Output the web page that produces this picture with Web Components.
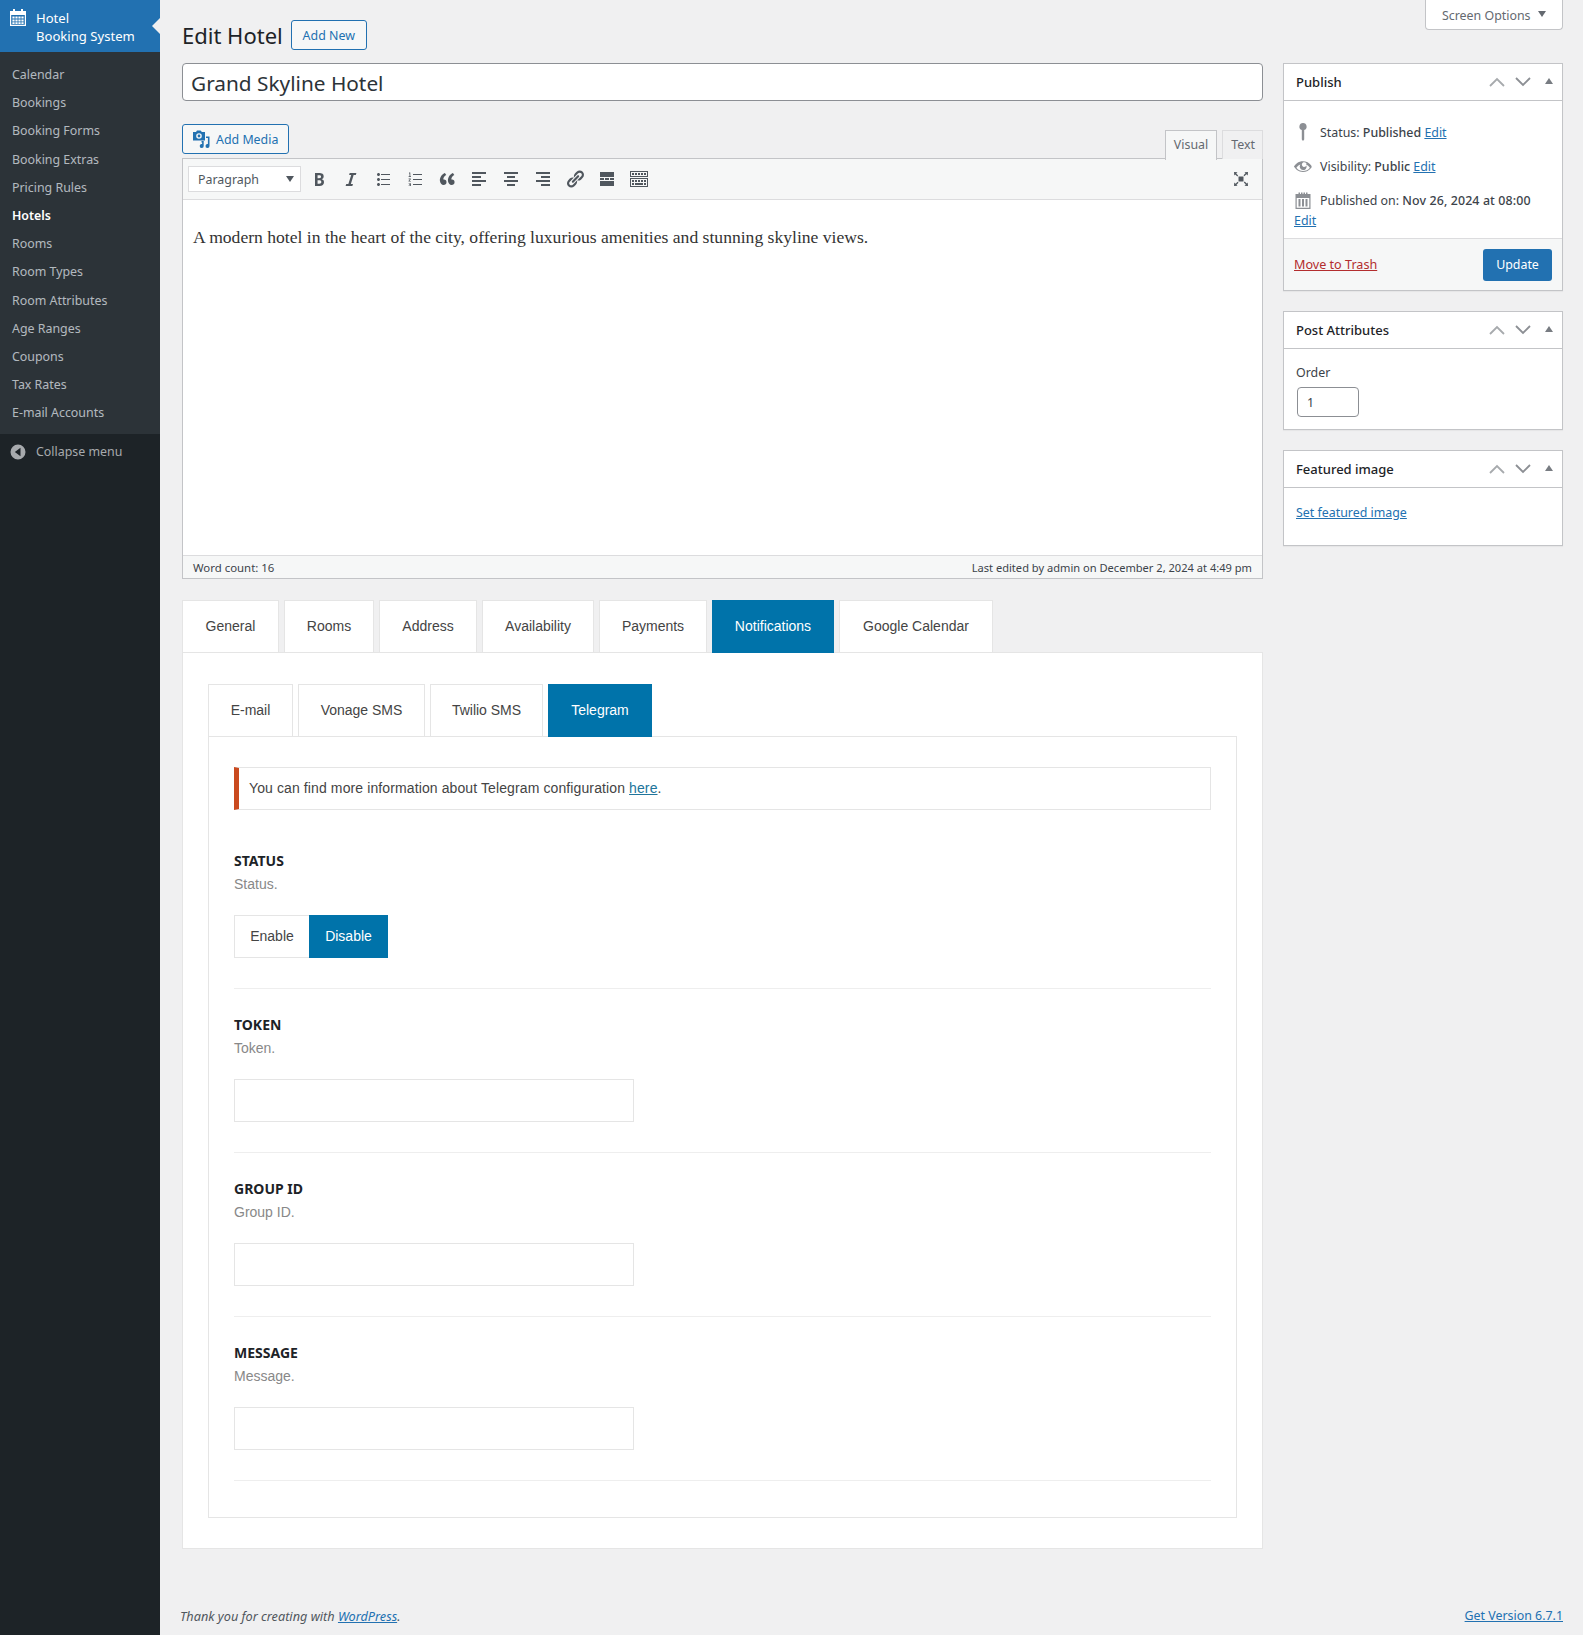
<!DOCTYPE html>
<html>
<head>
<meta charset="utf-8">
<title>Edit Hotel</title>
<style>
  html, body { margin: 0; padding: 0; background: #f0f0f1; }
  body { font-family: "Noto Sans", sans-serif; font-size: 12.4px; color: #3c434a; }
  a { color: #2271b1; }
</style>
</head>
<body>
<hb-app>
  <hb-sidebar slot="side"></hb-sidebar>
  <hb-heading></hb-heading>
  <div class="cols" style="display:flex;gap:20px;align-items:flex-start">
    <div style="width:1081px;flex:none">
      <hb-title value="Grand Skyline Hotel"></hb-title>
      <hb-editor></hb-editor>
      <hb-settings></hb-settings>
    </div>
    <div style="width:280px;flex:none">
      <hb-publish></hb-publish>
      <hb-metabox heading="Post Attributes">
        <div style="padding:0 0 12px">
          <div style="line-height:20px;margin-top:2px;margin-bottom:4px;color:#3c434a;font-size:12.4px">Order</div>
          <div style="width:62px;height:30px;box-sizing:border-box;border:1px solid #8c8f94;border-radius:4px;background:#fff;padding-left:9px;line-height:30px;font-size:12.4px;margin-left:1px">1</div>
        </div>
      </hb-metabox>
      <hb-metabox heading="Featured image">
        <div style="padding:3px 0 22px;line-height:20px;font-size:12.4px"><a href="#">Set featured image</a></div>
      </hb-metabox>
    </div>
  </div>
  <hb-footer></hb-footer>
</hb-app>

<script>
// small helper, every element gets its markup in an open shadow root
function shadow(el, html) {
  el.attachShadow({mode: 'open'}).innerHTML = html;
}

const ic = {
  cal: 'M2 4h3V2h2v2h6V2h2v2h3v15H2zM3.2 8v9.8h13.6V8zM4.4 9.4h2.2v2.2H4.4zm3 0h2.2v2.2H7.4zm3 0h2.2v2.2h-2.2zm3 0h2.2v2.2h-2.2zM4.4 12.4h2.2v2.2H4.4zm3 0h2.2v2.2H7.4zm3 0h2.2v2.2h-2.2zm3 0h2.2v2.2h-2.2zM4.4 15.2h2.2v1.8H4.4zm3 0h2.2v1.8H7.4zm3 0h2.2v1.8h-2.2zm3 0h2.2v1.8h-2.2z',
  media: 'M2 3h3l1-1.5h3.5L11 3h3v8.5H2zM8 4.2a2.8 2.8 0 1 0 0 5.6 2.8 2.8 0 0 0 0-5.6zM8 5.6a1.4 1.4 0 1 1 0 2.8 1.4 1.4 0 0 1 0-2.8zM15 7.5h3.5v9.4a2 2 0 1 1-1.6-1.9V9h-1.9zM10.5 12h2.2v4.9a2 2 0 1 1-1.6-1.9v-1.6h-.6z',
  bold: 'M6 4v13h4.54c1.37 0 2.46-.33 3.26-1 .8-.66 1.2-1.58 1.2-2.77 0-.84-.17-1.51-.51-2.01s-.9-.85-1.67-1.03v-.09c.57-.1 1.02-.4 1.36-.9s.51-1.13.51-1.91c0-1.14-.39-1.98-1.17-2.53C12.75 4.26 11.5 4 9.78 4H6zm2.57 5.15V6.26h1.36c.73 0 1.27.11 1.61.32.34.22.51.58.51 1.07 0 .54-.16.92-.47 1.15s-.82.35-1.51.35h-1.5zm0 2.19h1.6c1.44 0 2.16.53 2.16 1.61 0 .6-.17 1.05-.51 1.34s-.86.43-1.57.43H8.57v-3.38z',
  italic: 'M14.78 6h-2.13l-2.8 9h2.12l-.62 2H4.6l.62-2h2.14L10.2 6H8.1l.62-2h6.7z',
  ul: 'M5.5 7C4.67 7 4 6.33 4 5.5S4.67 4 5.5 4 7 4.67 7 5.5 6.33 7 5.5 7zM8 5h9v1H8V5zm-2.5 7C4.67 12 4 11.33 4 10.5S4.67 9 5.5 9 7 9.67 7 10.5 6.33 12 5.5 12zM8 10h9v1H8v-1zm-2.5 7c-.83 0-1.5-.67-1.5-1.5S4.67 14 5.5 14s1.5.67 1.5 1.5S6.33 17 5.5 17zM8 15h9v1H8v-1z',
  ol: 'M8 5h9v1H8zm0 5h9v1H8zm0 5h9v1H8zM4 3.6h1.3v3.7H6V8H3.6v-.7h.9V4.4H4zM3.6 9.6h2.2v.7l-1.3 1.6h1.4v.7H3.5v-.6l1.4-1.7H3.6zM3.6 14.2h2.3v2.8H3.6v-.6h1.5v-.5H4.2v-.6h.9v-.5H3.6z',
  quote: 'M9.49 13.22c0-.74-.2-1.38-.61-1.9-.62-.78-1.83-.88-2.53-.72-.29-1.65 1.11-3.75 2.92-4.65L7.88 4c-2.73 1.3-5.42 4.28-4.96 8.05C3.21 14.43 4.59 16 6.54 16c.85 0 1.56-.25 2.12-.75s.83-1.18.83-2.03zm8.05 0c0-.74-.2-1.38-.61-1.9-.63-.78-1.83-.88-2.53-.72-.29-1.65 1.11-3.75 2.92-4.65L15.93 4c-2.73 1.3-5.41 4.28-4.95 8.05.29 2.38 1.66 3.95 3.61 3.95.85 0 1.56-.25 2.12-.75s.83-1.18.83-2.03z',
  al: 'M3 3h14v2H3zm0 4h9v2H3zm0 4h14v2H3zm0 4h9v2H3z',
  ac: 'M3 3h14v2H3zm3 4h8v2H6zm-3 4h14v2H3zm3 4h8v2H6z',
  ar: 'M3 3h14v2H3zm5 4h9v2H8zm-5 4h14v2H3zm5 4h9v2H8z',
  link: 'M17.74 2.76c1.68 1.69 1.68 4.41 0 6.1l-1.53 1.52c-1.12 1.12-2.7 1.47-4.14 1.09l2.62-2.61.76-.77.76-.76c.84-.84.84-2.2 0-3.04-.84-.85-2.2-.85-3.04 0l-.77.76-3.38 3.38c-.37-1.44-.02-3.02 1.1-4.14l1.52-1.53c1.69-1.68 4.42-1.68 6.1 0zM8.59 13.43l5.34-5.34c.42-.42.42-1.1 0-1.52-.44-.43-1.13-.39-1.53 0l-5.33 5.34c-.42.42-.42 1.1 0 1.52.44.43 1.13.39 1.52 0zm-.76 2.29l4.14-4.15c.38 1.44.03 3.02-1.09 4.14l-1.52 1.53c-1.69 1.68-4.41 1.68-6.1 0-1.68-1.68-1.68-4.42 0-6.1l1.53-1.52c1.12-1.12 2.7-1.47 4.14-1.1l-4.14 4.15c-.85.84-.85 2.2 0 3.05.84.84 2.2.84 3.04 0z',
  more: 'M3 3h14v5H3zM3 9h4v2H3zm5 0h4v2H8zm5 0h4v2h-4zM3 12h14v5H3z',
  sink: 'M1 2h18v6H1zM2 3v4h16V3zM3 4h2v2H3zm3 0h2v2H6zm3 0h2v2H9zm3 0h2v2h-2zm3 0h2v2h-2zM1 9h18v9H1zM2 10v7h16v-7zM3 11h2v2H3zm3 0h2v2H6zm3 0h2v2H9zm3 0h2v2h-2zm3 0h2v2h-2zM3 14h2v2H3zm3 0h8v2H6zm9 0h2v2h-2z',
  full: 'M7.5 7.5h5v5h-5zM3 3l3.5.3L5.2 4.6l2 2-.9.9-2-2L3.3 6.5zM17 3l-.3 3.5-1.3-1.3-2 2-.9-.9 2-2L13.5 3.3zM3 17l.3-3.5 1.3 1.3 2-2 .9.9-2 2 1 1zM17 17l-3.5-.3 1.3-1.3-2-2 .9-.9 2 2 1-1z',
  pin: 'M10 1a3.6 3.6 0 0 1 1.2 7v9.5L10 19l-1.2-1.5V8A3.6 3.6 0 0 1 10 1z',
  eye: 'M18.3 9.5C15 4.9 8.5 3.8 3.9 7.2c-1.2.9-2.2 2.1-3 3.4.8 1.3 1.8 2.5 3 3.4 4.6 3.4 11 2.3 14.4-2.3.5-.5.5-1.3 0-1.7zm-8.3-3c1.1-.7 2.6-.4 3.3.8s.4 2.6-.8 3.3-2.6.4-3.3-.8-.3-2.6.8-3.3zm0 8.5c-2.6 0-5-1.2-6.6-3.3 1-1.4 2.4-2.6 4-3.2-.4.6-.7 1.3-.7 2.1 0 1.9 1.5 3.5 3.4 3.5s3.5-1.5 3.5-3.4v-.1c0-.8-.3-1.5-.7-2.1 1.6.7 3 1.8 4 3.2-1.6 2.1-4.3 3.3-6.9 3.3z',
  pub: 'M2.5 4h3V2.5h1.5V4h1V2.5h1.5V4h1V2.5H12V4h1V2.5h1.5V4h3v15h-15zM3.7 8v9.8h12.6V8zM5.5 9h2v7.5h-2zm3.5 0h2v7.5H9zm3.5 0h2v7.5h-2z',
  collapse: 'M10 2.5a7.5 7.5 0 1 0 0 15 7.5 7.5 0 0 0 0-15zm2.5 3.2v8.6L6.8 10z'
};

function svg(name, size, color) {
  return `<svg width="${size}" height="${size}" viewBox="0 0 20 20" fill="${color}" style="display:block;flex:none" fill-rule="evenodd"><path d="${ic[name]}"/></svg>`;
}

class HbApp extends HTMLElement {
  constructor() {
    super();
    shadow(this, `
      <style>
        :host { display: flex; min-height: 1635px; }
        .side { width: 160px; flex: none; background: #1d2327; }
        .main { flex: 1; padding: 0 20px 0 22px; min-width: 0; display: flex; flex-direction: column; }
      </style>
      <div class="side"><slot name="side"></slot></div>
      <div class="main"><slot></slot></div>
    `);
  }
}

class HbSidebar extends HTMLElement {
  constructor() {
    super();
    const items = ['Calendar','Bookings','Booking Forms','Booking Extras','Pricing Rules','Hotels','Rooms','Room Types','Room Attributes','Age Ranges','Coupons','Tax Rates','E-mail Accounts'];
    shadow(this, `
      <style>
        :host { display: block; font-size: 12.4px; }
        .top { height: 52px; background: #2271b1; color: #fff; position: relative; display: flex; box-sizing: border-box; padding: 9px 0 0 8px; font-size: 13.1px; line-height: 18px; }
        .top svg { margin-right: 8px; margin-top: -2px; }
        .top::after { content: ""; position: absolute; right: 0; top: 18px; border: 8px solid transparent; border-right-color: #f0f0f1; border-left: 0; }
        ul { list-style: none; margin: 0; padding: 9px 0 7px; background: #2c3338; }
        li { padding: 0 12px; height: 28.2px; line-height: 28px; color: rgba(240,246,252,.7); white-space: nowrap; }
        li.on { color: #fff; font-weight: 600; }
        .col { display: flex; align-items: center; height: 35px; color: #a7aaad; padding-left: 8px; }
        .col svg { margin-right: 8px; }
      </style>
      <div class="top">${svg('cal', 20, '#fff')}<div>Hotel<br>Booking System</div></div>
      <ul>${items.map(t => `<li class="${t == 'Hotels' ? 'on' : ''}">${t}</li>`).join('')}</ul>
      <div class="col">${svg('collapse', 20, '#a7aaad')}<span>Collapse menu</span></div>
    `);
  }
}

class HbHeading extends HTMLElement {
  constructor() {
    super();
    shadow(this, `
      <style>
        :host { display: flex; height: 63px; align-items: flex-start; box-sizing: border-box; }
        h1 { font-size: 22px; font-weight: 400; line-height: 30px; margin: 20px 8px 0 0; color: #1d2327; }
        .add { margin-top: 20px; height: 30px; width: 76px; text-align: center; box-sizing: border-box; border: 1px solid #2271b1; border-radius: 3px; color: #2271b1; background: #f6f7f7; line-height: 29px; font-size: 12.4px; }
        .opts { margin-left: auto; width: 138px; height: 30px; box-sizing: border-box; background: #fff; border: 1px solid #c3c4c7; border-top: 0; border-radius: 0 0 4px 4px; color: #646970; font-size: 12.4px; padding: 1px 0 0 16px; display: flex; align-items: center; }
        .opts i { margin-left: 7px; width: 0; height: 0; border: 4px solid transparent; border-top: 6px solid #646970; border-bottom: 0; margin-top: -2px; }
      </style>
      <h1>Edit Hotel</h1><div class="add">Add New</div>
      <div class="opts">Screen Options<i></i></div>
    `);
  }
}

class HbTitle extends HTMLElement {
  constructor() {
    super();
    shadow(this, `
      <style>
        :host { display: block; height: 38px; box-sizing: border-box; background: #fff; border: 1px solid #8c8f94; border-radius: 4px; font-size: 20.8px; line-height: 38px; padding-left: 8px; color: #2c3338; }
      </style>
      ${this.getAttribute('value')}
    `);
  }
}

class HbEditor extends HTMLElement {
  constructor() {
    super();
    const tools = ['bold','italic','ul','ol','quote','al','ac','ar','link','more','sink'];
    shadow(this, `
      <style>
        :host { display: block; margin-top: 23px; }
        .head { display: flex; height: 35px; align-items: flex-start; }
        .media { height: 30px; box-sizing: border-box; width: 107px; display: flex; align-items: center; border: 1px solid #2271b1; border-radius: 3px; background: #f6f7f7; color: #2271b1; padding-left: 8px; font-size: 12.4px; }
        .media svg { margin-right: 5px; }
        .tabs { margin-left: auto; display: flex; gap: 5px; margin-top: 6px; }
        .tab { height: 29px; box-sizing: border-box; border: 1px solid #dcdcde; border-bottom: 0; line-height: 27px; padding: 0 8px; font-size: 12.4px; color: #646970; background: #f0f0f1; }
        .tab:last-child { padding: 0 7px 0 8px; }
        .tab.on { background: #f6f7f7; height: 30px; position: relative; margin-bottom: -1px; border-color: #c3c4c7; }
        .box { border: 1px solid #c3c4c7; margin-top: -1px; background: #fff; }
        .bar { height: 41px; box-sizing: border-box; background: #f6f7f7; border-bottom: 1px solid #dcdcde; display: flex; align-items: center; padding-left: 5px; padding-right: 11px; }
        .select { width: 113px; height: 26px; box-sizing: border-box; background: #fff; border: 1px solid #dcdcde; font-size: 12.4px; color: #50575e; line-height: 25px; padding-left: 9px; position: relative; margin-right: 2px; }
        .select::after { content: ""; position: absolute; right: 6px; top: 9px; border: 4px solid transparent; border-top: 6px solid #50575e; border-bottom: 0; }
        .b { width: 32px; display: flex; justify-content: center; }
        .end { margin-left: auto; }
        .body { height: 355px; box-sizing: border-box; padding: 26px 9px 0 10px; font-family: Georgia, "Liberation Serif", serif; line-height: 22px; color: #333; font-size: 17.6px; }
        .foot { height: 22px; border-top: 1px solid #dcdcde; background: #f6f7f7; display: flex; justify-content: space-between; align-items: center; padding: 0 10px; font-size: 11.4px; color: #3c434a; }
        .foot span:last-child { font-size: 11.1px; }
      </style>
      <div class="head">
        <div class="media">${svg('media', 20, '#2271b1')}Add Media</div>
        <div class="tabs"><div class="tab on">Visual</div><div class="tab">Text</div></div>
      </div>
      <div class="box">
        <div class="bar">
          <div class="select">Paragraph</div>
          ${tools.map(t => `<div class="b">${svg(t, 20, '#50575e')}</div>`).join('')}
          <div class="end">${svg('full', 20, '#50575e')}</div>
        </div>
        <div class="body">A modern hotel in the heart of the city, offering luxurious amenities and stunning skyline views.</div>
        <div class="foot"><span>Word count: 16</span><span>Last edited by admin on December 2, 2024 at 4:49 pm</span></div>
      </div>
    `);
  }
}

class HbTabs extends HTMLElement {
  constructor() {
    super();
    const names = (this.getAttribute('names') || '').split('|');
    const widths = (this.getAttribute('widths') || '').split('|');
    const active = this.getAttribute('active');
    shadow(this, `
      <style>
        :host { display: block; font-family: "Liberation Sans", Arial, sans-serif; font-size: 14px; }
        .row { display: flex; gap: 5px; height: 52px; align-items: flex-start; position: relative; z-index: 1; }
        .t { height: 52px; box-sizing: border-box; text-align: center; line-height: 50px; background: #fff; color: #444; border: 1px solid #e5e5e5; border-bottom: 0; }
        .t.on { height: 53px; background: #0073aa; color: #fff; border-color: #0073aa; }
        .panel { background: #fff; border: 1px solid #e5e5e5; }
      </style>
      <div class="row">${names.map((n, i) => `<div class="t ${n == active ? 'on' : ''}" style="width:${widths[i]}px">${n}</div>`).join('')}</div>
      <div class="panel"><slot></slot></div>
    `);
  }
}

class HbField extends HTMLElement {
  constructor() {
    super();
    const type = this.getAttribute('type');
    const name = this.getAttribute('name');
    const control = type == 'switch'
      ? `<div class="sw"><span style="width:75px">Enable</span><span class="on" style="width:79px">Disable</span></div>`
      : `<div class="inp"></div>`;
    shadow(this, `
      <style>
        :host { display: block; border-bottom: 1px solid #eee; padding-bottom: 30px; margin-bottom: 25px; }
        .l { font: 700 14px/22px "Noto Sans", sans-serif; color: #1d2327; text-transform: uppercase; }
        .d { font: 14px/22px "Liberation Sans", Arial, sans-serif; color: #888; margin-top: 1px; }
        .sw { display: flex; margin-top: 20px; height: 43px; font: 14px/41px "Liberation Sans", Arial, sans-serif; color: #444; }
        .sw span { box-sizing: border-box; border: 1px solid #e5e5e5; text-align: center; background: #fff; }
        .sw span:first-child { border-right: 0; }
        .sw span.on { background: #0073aa; border-color: #0073aa; color: #fff; }
        .inp { margin-top: 20px; width: 400px; height: 43px; box-sizing: border-box; border: 1px solid #e5e5e5; background: #fff; }
      </style>
      <div class="l">${name}</div>
      <div class="d">${name}.</div>
      ${control}
    `);
  }
}

class HbNotice extends HTMLElement {
  constructor() {
    super();
    shadow(this, `
      <style>
        :host { display: block; height: 43px; box-sizing: border-box; border: 1px solid #e5e5e5; border-left: 5px solid #ca4a1f; padding-left: 10px; font: 14px/41px "Liberation Sans", Arial, sans-serif; letter-spacing: .11px; color: #444; margin-bottom: 40px; }
      </style>
      <slot></slot>
    `);
  }
}

class HbSettings extends HTMLElement {
  constructor() {
    super();
    shadow(this, `
      <style>
        :host { display: block; margin-top: 21px; }
        .outer { padding: 31px 25px 30px; }
        .inner { padding: 30px 25px 11px; }
      </style>
      <hb-tabs names="General|Rooms|Address|Availability|Payments|Notifications|Google Calendar" widths="97|90|98|112|108|122|154" active="Notifications">
        <div class="outer">
          <hb-tabs names="E-mail|Vonage SMS|Twilio SMS|Telegram" widths="85|127|113|104" active="Telegram">
            <div class="inner">
              <hb-notice>You can find more information about Telegram configuration <a href="#" style="color:#21759b">here</a>.</hb-notice>
              <hb-field type="switch" name="Status"></hb-field>
              <hb-field name="Token"></hb-field>
              <hb-field name="Group ID"></hb-field>
              <hb-field name="Message"></hb-field>
            </div>
          </hb-tabs>
        </div>
      </hb-tabs>
    `);
  }
}

class HbMetabox extends HTMLElement {
  constructor() {
    super();
    shadow(this, `
      <style>
        :host { display: block; background: #fff; border: 1px solid #c3c4c7; margin-bottom: 20px; box-shadow: 0 1px 1px rgba(0,0,0,.04); font-size: 12.4px; }
        .h { height: 36px; display: flex; align-items: center; border-bottom: 1px solid #c3c4c7; padding-left: 12px; font-size: 13px; font-weight: 500; color: #1d2327; }
        .ctl { margin-left: auto; display: flex; align-items: center; margin-right: 9px; }
        .ctl svg { display: block; margin-left: 10px; }
        .tri { margin-left: 14px; width: 0; height: 0; border: 4px solid transparent; border-bottom: 6px solid #787c82; border-top: 0; margin-top: -3px; }
        .c { padding: 12px 12px 0; }
        :host([flush]) .c { padding: 0; }
      </style>
      <div class="h"><span>${this.getAttribute('heading')}</span>
        <div class="ctl">
          <svg width="16" height="16" viewBox="0 0 16 16" fill="none" stroke="#a7aaad" stroke-width="1.8"><path d="M1 12l7-7 7 7"/></svg>
          <svg width="16" height="16" viewBox="0 0 16 16" fill="none" stroke="#8c8f94" stroke-width="1.8"><path d="M1 4l7 7 7-7"/></svg>
          <div class="tri"></div>
        </div>
      </div>
      <div class="c"><slot></slot></div>
    `);
  }
}

class HbPublish extends HTMLElement {
  constructor() {
    super();
    shadow(this, `
      <style>
        :host { display: block; }
        a { color: #2271b1; }
        .r { display: flex; align-items: center; height: 34px; font-size: 12.4px; color: #3c434a; }
        .r svg { margin-right: 7px; margin-left: -1px; }
        .r b { font-weight: 500; }
        .r b.date { letter-spacing: .12px; }
        .pad { padding: 14px 10px 9px 10px; }
        .e { line-height: 16px; margin-top: -4px; font-size: 12.4px; }
        .act { background: #f6f7f7; border-top: 1px solid #dcdcde; height: 52px; box-sizing: border-box; display: flex; align-items: center; justify-content: space-between; padding: 0 10px; }
        .del { color: #b32d2e; font-size: 12.6px; }
        .up { background: #2271b1; color: #fff; width: 69px; height: 32px; border-radius: 3px; text-align: center; line-height: 32px; font-size: 12.4px; }
      </style>
      <hb-metabox heading="Publish" flush>
        <div class="pad">
          <div class="r">${svg('pin', 20, '#8c8f94')}<span>Status: <b>Published</b> <a href="#">Edit</a></span></div>
          <div class="r">${svg('eye', 20, '#8c8f94')}<span>Visibility: <b>Public</b> <a href="#">Edit</a></span></div>
          <div class="r">${svg('pub', 20, '#8c8f94')}<span>Published on: <b class="date">Nov 26, 2024 at 08:00</b></span></div>
          <div class="e"><a href="#">Edit</a></div>
        </div>
        <div class="act"><a class="del" href="#">Move to Trash</a><div class="up">Update</div></div>
      </hb-metabox>
    `);
  }
}

class HbFooter extends HTMLElement {
  constructor() {
    super();
    shadow(this, `
      <style>
        :host { display: flex; justify-content: space-between; margin-top: auto; padding-bottom: 9px; margin-left: -2px; font-size: 12.4px; line-height: 20px; color: #50575e; }
        i { font-size: 12.7px; }
        a { color: #2271b1; }
      </style>
      <i>Thank you for creating with <a href="#">WordPress</a>.</i>
      <a href="#">Get Version 6.7.1</a>
    `);
  }
}

customElements.define('hb-app', HbApp);
customElements.define('hb-sidebar', HbSidebar);
customElements.define('hb-heading', HbHeading);
customElements.define('hb-title', HbTitle);
customElements.define('hb-editor', HbEditor);
customElements.define('hb-tabs', HbTabs);
customElements.define('hb-field', HbField);
customElements.define('hb-notice', HbNotice);
customElements.define('hb-settings', HbSettings);
customElements.define('hb-metabox', HbMetabox);
customElements.define('hb-publish', HbPublish);
customElements.define('hb-footer', HbFooter);
</script>
</body>
</html>
